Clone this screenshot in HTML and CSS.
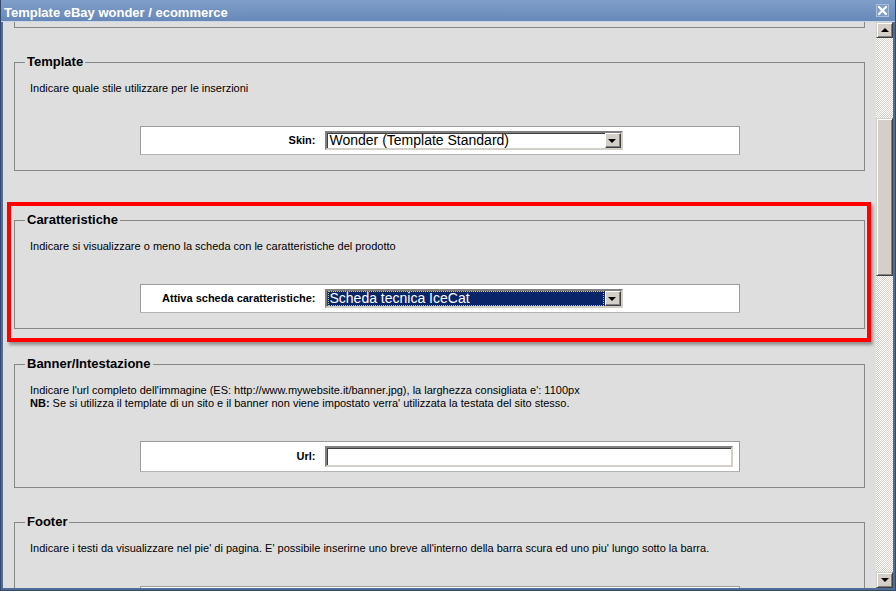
FILE: index.html
```html
<!DOCTYPE html>
<html lang="it">
<head>
    <meta charset="UTF-8">
    <title>Template eBay wonder / ecommerce</title>
    <link rel="stylesheet" href="styles.css">
</head>
<body>
    <div class="window">
        <div class="titlebar">
            <span class="title">Template eBay wonder / ecommerce</span>
            <span class="close">
                <svg width="9" height="9" viewBox="0 0 9 9"><path d="M1 1 L8 8 M8 1 L1 8" stroke="#fff" stroke-width="2.2" stroke-linecap="square"/></svg>
            </span>
        </div>

        <div class="frame">
            <div class="content">
                <!-- end of the previous section, scrolled out of view -->
                <div class="fieldset-cut"></div>

                <fieldset class="section">
                    <legend>Template</legend>
                    <p class="desc">Indicare quale stile utilizzare per le inserzioni</p>
                    <div class="form-row">
                        <label class="form-label">Skin:</label>
                        <div class="select">
                            <span class="select-value">Wonder (Template Standard)</span>
                            <span class="select-arrow"></span>
                        </div>
                    </div>
                </fieldset>

                <div class="highlight">
                    <fieldset class="section">
                        <legend>Caratteristiche</legend>
                        <p class="desc">Indicare si visualizzare o meno la scheda con le caratteristiche del prodotto</p>
                        <div class="form-row">
                            <label class="form-label">Attiva scheda caratteristiche:</label>
                            <div class="select select-focus">
                                <span class="select-value">Scheda tecnica IceCat</span>
                                <span class="select-arrow"></span>
                            </div>
                        </div>
                    </fieldset>
                </div>

                <fieldset class="section">
                    <legend>Banner/Intestazione</legend>
                    <p class="desc">
                        Indicare l'url completo dell'immagine (ES: http://www.mywebsite.it/banner.jpg), la larghezza consigliata e': 1100px<br>
                        <b>NB:</b> Se si utilizza il template di un sito e il banner non viene impostato verra' utilizzata la testata del sito stesso.
                    </p>
                    <div class="form-row">
                        <label class="form-label label-input">Url:</label>
                        <div class="text-input"></div>
                    </div>
                </fieldset>

                <fieldset class="section">
                    <legend>Footer</legend>
                    <p class="desc">Indicare i testi da visualizzare nel pie' di pagina. E' possibile inserirne uno breve all'interno della barra scura ed uno piu' lungo sotto la barra.</p>
                    <div class="form-row form-row-tall"></div>
                </fieldset>
            </div>

            <div class="scrollbar">
                <div class="sb-btn"><span class="tri-up"></span></div>
                <div class="sb-track">
                    <div class="sb-thumb"></div>
                </div>
                <div class="sb-btn"><span class="tri-down"></span></div>
            </div>
        </div>
    </div>
</body>
</html>
```

FILE: styles.css
```css
* {
    margin: 0;
    padding: 0;
    box-sizing: border-box;
    font-family: 'Liberation Sans', Arial, sans-serif;
}

body {
    background-color: #dedede;
    overflow: hidden;
}

.window {
    width: 896px;
    height: 591px;
    display: flex;
    flex-direction: column;
    background-color: #4f6b96;
    border: 1px solid #34486a;
    border-top: none;
}

.titlebar {
    height: 22px;
    flex-shrink: 0;
    display: flex;
    align-items: flex-start;
    justify-content: space-between;
    padding: 5px 6px 0 3px;
    background: linear-gradient(#7f9ec9, #6888b9);
    border-bottom: 1px solid #c9d6e8;
}

.title {
    color: white;
    font-weight: bold;
    font-size: 13px;
    line-height: 15px;
}

.close {
    width: 13px;
    height: 13px;
    margin-top: -1px;
    display: flex;
    align-items: center;
    justify-content: center;
    background-color: #7f9ec8;
    border: 1px solid #a9bedb;
}

.frame {
    flex: 1;
    display: flex;
    min-height: 0;
    padding: 0 2px 2px 2px;
}

.content {
    flex: 1;
    background-color: #dedede;
    padding: 0 11px;
    overflow: hidden;
}

.fieldset-cut {
    height: 6px;
    border: 1px solid #878787;
    border-top: none;
    margin-bottom: 26px;
}

.section {
    border: 1px solid #878787;
    padding: 0 15px 15px 15px;
    margin-bottom: 26px;
}

.section legend {
    font-size: 13px;
    font-weight: bold;
    line-height: 16px;
    padding: 0 2px;
    margin-left: -5px;
    color: #000;
}

.desc {
    font-size: 11px;
    line-height: 13px;
    margin: 12px 0 31px;
    color: #000;
}

.form-row {
    width: 600px;
    margin: 0 auto;
    display: flex;
    background-color: white;
    border: 1px solid #9c9c9c;
    border-bottom-color: #b4b4b4;
    padding: 4px 0 4px 0;
}

.form-row-tall {
    height: 40px;
}

.form-label {
    width: 175px;
    margin-right: 9px;
    text-align: right;
    font-size: 11px;
    font-weight: bold;
    padding-top: 3px;
}

.label-input {
    padding-top: 4px;
}

.select {
    width: 298px;
    height: 19px;
    display: flex;
    align-items: center;
    justify-content: space-between;
    background-color: white;
    border: 2px solid;
    border-color: #808080 #d4d0c8 #d4d0c8 #808080;
    box-shadow: inset 1px 1px #404040;
}

.select-value {
    font-size: 14px;
    line-height: 15px;
    padding-left: 3px;
    color: #000;
}

.select-focus {
    background-color: #0a246a;
}

.select-focus .select-value {
    color: white;
    height: 15px;
    margin-left: 1px;
    padding-left: 2px;
    padding-right: 4px;
    flex: 1;
    outline: 1px dotted #c9c28a;
    outline-offset: -1px;
    margin-right: 1px;
}

.select-arrow {
    width: 16px;
    height: 15px;
    flex-shrink: 0;
    display: flex;
    align-items: center;
    justify-content: center;
    background-color: #d4d0c8;
    border: 1px solid;
    border-color: #fff #404040 #404040 #fff;
    box-shadow: inset -1px -1px #808080;
}

.select-arrow::after {
    content: '';
    border-left: 4px solid transparent;
    border-right: 4px solid transparent;
    border-top: 4px solid #000;
    margin: 1px 1px 0 0;
}

.text-input {
    width: 408px;
    height: 21px;
    background-color: white;
    border: 2px solid;
    border-color: #808080 #d4d0c8 #d4d0c8 #808080;
    box-shadow: inset 1px 1px #404040;
}

.highlight {
    border: 4px solid #ff0000;
    margin: 31px -6px 14px -7px;
    padding: 6px 2px 9px 3px;
    box-shadow: 2px 3px 3px rgba(0, 0, 0, 0.35);
}

.highlight .section {
    margin-bottom: 0;
}

.scrollbar {
    width: 17px;
    display: flex;
    flex-direction: column;
    background-color: #dedede;
}

.sb-btn {
    height: 16px;
    flex-shrink: 0;
    display: flex;
    align-items: center;
    justify-content: center;
    background-color: #d4d0c8;
    border: 1px solid;
    border-color: #d4d0c8 #404040 #404040 #d4d0c8;
    box-shadow: inset 1px 1px #fff, inset -1px -1px #808080;
}

.tri-up {
    border-left: 4px solid transparent;
    border-right: 4px solid transparent;
    border-bottom: 4px solid #000;
}

.tri-down {
    border-left: 4px solid transparent;
    border-right: 4px solid transparent;
    border-top: 4px solid #000;
}

.sb-track {
    flex: 1;
    background-color: #f4f3f0;
    background-image: repeating-conic-gradient(#d4d0c8 0 25%, #ffffff 0 50%);
    background-size: 2px 2px;
}

.sb-thumb {
    height: 158px;
    margin-top: 80px;
    background-color: #d4d0c8;
    border: 1px solid;
    border-color: #d4d0c8 #404040 #404040 #d4d0c8;
    box-shadow: inset 1px 1px #fff, inset -1px -1px #808080;
}
```
